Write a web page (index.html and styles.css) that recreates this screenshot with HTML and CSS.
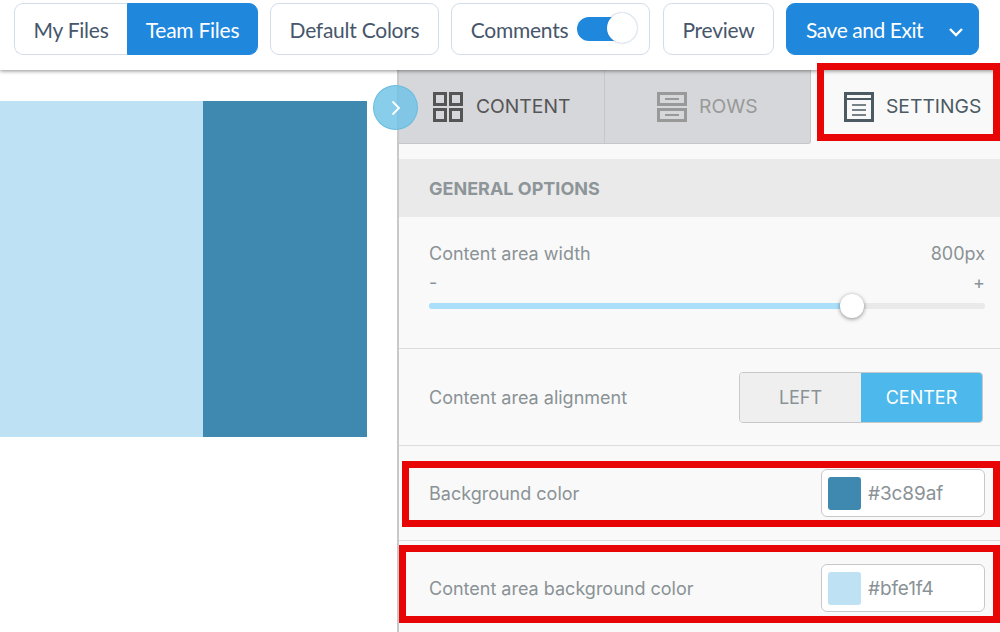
FILE: index.html
```html
<!DOCTYPE html>
<html lang="en">
<head>
    <meta charset="UTF-8">
    <title>Email Editor</title>
    <link rel="stylesheet" href="styles.css">
</head>
<body>
    <header class="toolbar">
        <div class="btn-group">
            <button class="btn btn-my">My Files</button>
            <button class="btn btn-team">Team Files</button>
        </div>
        <button class="btn btn-colors">Default Colors</button>
        <div class="btn btn-comments">
            <span>Comments</span>
            <span class="switch"><span class="switch-knob"></span></span>
        </div>
        <button class="btn btn-preview">Preview</button>
        <button class="btn btn-save">
            <span>Save and Exit</span>
            <svg class="save-arrow" width="16" height="10" viewBox="0 0 16 10"><path d="M2 2l6 6 6-6" fill="none" stroke="#fff" stroke-width="2.4"/></svg>
        </button>
    </header>

    <main class="workspace">
        <section class="canvas">
            <div class="email">
                <div class="email-content"></div>
                <div class="email-side"></div>
            </div>
        </section>

        <aside class="panel">
            <nav class="tabs">
                <div class="tab tab-content">
                    <svg width="30" height="30" viewBox="0 0 30 30" fill="none" stroke="#555" stroke-width="3">
                        <rect x="1.5" y="1.5" width="11" height="11"/>
                        <rect x="17.5" y="1.5" width="11" height="11"/>
                        <rect x="1.5" y="17.5" width="11" height="11"/>
                        <rect x="17.5" y="17.5" width="11" height="11"/>
                    </svg>
                    <span>CONTENT</span>
                </div>
                <div class="tab tab-rows">
                    <svg width="30" height="30" viewBox="0 0 30 30" fill="none" stroke="#999" stroke-width="3">
                        <rect x="1.5" y="1.5" width="27" height="11"/>
                        <rect x="1.5" y="17.5" width="27" height="11"/>
                        <path d="M8 7h14M8 23h14" stroke-width="2"/>
                    </svg>
                    <span>ROWS</span>
                </div>
                <div class="tab tab-settings">
                    <svg width="30" height="30" viewBox="0 0 30 30" fill="none" stroke="#4b5a63">
                        <rect x="1.5" y="1.5" width="27" height="27" stroke-width="3"/>
                        <path d="M2 7h26" stroke-width="2"/>
                        <path d="M8 13h14M8 18h14M8 23h14" stroke-width="1.6"/>
                    </svg>
                    <span>SETTINGS</span>
                </div>
            </nav>

            <h2 class="section-title">GENERAL OPTIONS</h2>

            <div class="row row-width">
                <div class="row-head">
                    <span>Content area width</span>
                    <span>800px</span>
                </div>
                <div class="scale"><span>-</span><span>+</span></div>
                <div class="slider">
                    <div class="slider-fill"></div>
                    <div class="slider-knob"></div>
                </div>
            </div>

            <div class="row row-align">
                <span>Content area alignment</span>
                <div class="align-group">
                    <span class="align-btn">LEFT</span>
                    <span class="align-btn align-active">CENTER</span>
                </div>
            </div>

            <div class="row row-color">
                <span>Background color</span>
                <div class="color-input">
                    <span class="swatch swatch-dark"></span>
                    <span>#3c89af</span>
                </div>
            </div>

            <div class="row row-color">
                <span>Content area background color</span>
                <div class="color-input">
                    <span class="swatch swatch-light"></span>
                    <span>#bfe1f4</span>
                </div>
            </div>
        </aside>

        <button class="collapse">
            <svg width="10" height="16" viewBox="0 0 10 16"><path d="M1.5 1.5L8 8l-6.5 6.5" fill="none" stroke="#fff" stroke-width="1.8"/></svg>
        </button>
    </main>

    <!-- annotation boxes from the screenshot -->
    <div class="mark mark-settings"></div>
    <div class="mark mark-bg"></div>
    <div class="mark mark-area"></div>
</body>
</html>
```

FILE: styles.css
```css
* {
    box-sizing: border-box;
}
html, body {
    height: 100%;
}
body {
    margin: 0;
    height: 632px;
    overflow: hidden;
    background: #fff;
    font-family: Inter, "Liberation Sans", sans-serif;
    position: relative;
}

/* top bar */
.toolbar {
    height: 70px;
    padding: 3px 0 0 14px;
    display: flex;
    align-items: flex-start;
    background: #fff;
    box-shadow: 0 1px 4px rgba(0, 0, 0, 0.45);
    position: relative;
    z-index: 2;
}
.btn {
    height: 52px;
    padding: 0;
    display: flex;
    align-items: center;
    justify-content: center;
    background: #fff;
    border: 1.5px solid #d3dde9;
    border-radius: 9px;
    font-family: Lato, sans-serif;
    font-size: 21px;
    letter-spacing: -0.25px;
    color: #46566b;
}
.btn-group {
    display: flex;
}
.btn-my {
    width: 113px;
    border-right: none;
    border-radius: 9px 0 0 9px;
}
.btn-team {
    width: 131px;
    background: #1f87dc;
    border-color: #1f87dc;
    border-radius: 0 9px 9px 0;
    color: #fff;
}
.btn-colors {
    width: 169px;
    margin-left: 12px;
}
.btn-comments {
    width: 199px;
    margin-left: 12px;
    padding-left: 6px;
    gap: 9px;
}
.btn-preview {
    width: 111px;
    margin-left: 13px;
}
.btn-save {
    width: 193px;
    margin-left: 12px;
    padding: 0 14px 0 19px;
    justify-content: space-between;
    background: #1f87dc;
    border-color: #1f87dc;
    letter-spacing: -0.45px;
    color: #fff;
}
.save-arrow {
    margin-top: 5px;
}
.switch {
    width: 59px;
    height: 24px;
    border-radius: 12px;
    background: #1f87dc;
    position: relative;
}
.switch-knob {
    position: absolute;
    right: -1px;
    top: -4px;
    width: 30px;
    height: 30px;
    border-radius: 50%;
    background: #fff;
    box-shadow: 0 0 2px rgba(70, 110, 170, 0.6);
}

/* main area */
.workspace {
    display: flex;
    height: 562px;
    position: relative;
}
.canvas {
    width: 397px;
    padding-top: 30.5px;
    background: #fff;
}
.email {
    display: flex;
    width: 367px;
    height: 336px;
}
.email-content {
    width: 203px;
    background: #bfe1f4;
}
.email-side {
    flex: 1;
    background: #3f88af;
}
.collapse {
    position: absolute;
    left: 373px;
    top: 15px;
    width: 45px;
    height: 45px;
    padding: 0;
    display: flex;
    align-items: center;
    justify-content: center;
    border: 1px solid rgba(100, 185, 222, 0.9);
    border-radius: 50%;
    background: rgba(110, 195, 230, 0.82);
}

/* side panel */
.panel {
    width: 603px;
    background: #f9f9f9;
    border-left: 2px solid #c9c9c9;
    color: #8a9296;
    font-size: 18px;
}
.tabs {
    display: flex;
    height: 74px;
}
.tab {
    display: flex;
    align-items: center;
    font-size: 19.3px;
    gap: 12px;
    background: #d6d7da;
    border-bottom: 1.5px solid #c6c7c9;
}
.tab span {
    margin-bottom: 2px;
}
.tab-content {
    width: 206px;
    padding-left: 34px;
    gap: 13px;
    color: #555;
    border-right: 1.5px solid #c6c7c9;
}
.tab-rows {
    width: 206px;
    padding-left: 52px;
    color: #999;
    border-right: 1.5px solid #c6c7c9;
    border-radius: 0 0 3px 0;
}
.tab-settings {
    flex: 1;
    padding-left: 33px;
    background: #f9f9f9;
    border-bottom: none;
    color: #4b5a63;
}
.section-title {
    margin: 15px 0 0;
    height: 58px;
    padding-left: 30px;
    display: flex;
    align-items: center;
    background: #eaeaea;
    font-size: 18px;
    font-weight: 700;
    color: #8d9599;
}
.row {
    padding: 0 15px 0 30px;
    border-bottom: 1.5px solid #ddd;
}
.row-width {
    height: 132px;
    padding-top: 26px;
}
.row-head, .scale {
    display: flex;
    justify-content: space-between;
}
.scale {
    margin-top: 9px;
    font-size: 18px;
    line-height: 20px;
}
.slider {
    height: 6px;
    margin-top: 10px;
    border-radius: 3px;
    background: #e9e9e9;
    position: relative;
}
.slider-fill {
    width: 76%;
    height: 100%;
    border-radius: 3px;
    background: #a9dff9;
}
.slider-knob {
    position: absolute;
    left: 411px;
    top: -9px;
    width: 24px;
    height: 24px;
    border-radius: 50%;
    background: #fff;
    box-shadow: 0 1px 4px rgba(0, 0, 0, 0.45);
}
.row-align, .row-color {
    display: flex;
    align-items: center;
    justify-content: space-between;
}
.row-align {
    height: 97px;
}
.row-color {
    height: 95px;
}
.align-group {
    display: flex;
    width: 244px;
    height: 51px;
    margin-right: 2px;
    border: 1.5px solid #c8c8c8;
    border-radius: 4px;
    overflow: hidden;
}
.align-btn {
    display: flex;
    align-items: center;
    justify-content: center;
    width: 121px;
    background: #efefef;
    color: #8a9296;
}
.align-active {
    flex: 1;
    background: #4db8eb;
    color: #fff;
}
.color-input {
    width: 164px;
    height: 48px;
    padding-left: 6px;
    display: flex;
    align-items: center;
    gap: 7px;
    background: #fff;
    border: 1.5px solid #c8c8c8;
    border-radius: 6px;
    font-size: 19px;
    letter-spacing: -0.1px;
}
.swatch {
    width: 33px;
    height: 33px;
    border-radius: 3px;
}
.swatch-dark {
    background: #3f88af;
}
.swatch-light {
    background: #bfe1f4;
}

/* red annotations */
.mark {
    position: absolute;
    border: 7px solid #e80505;
    z-index: 3;
}
.mark-settings {
    left: 817px;
    top: 63px;
    width: 183px;
    height: 78px;
}
.mark-bg {
    left: 402px;
    top: 461px;
    width: 598px;
    height: 66px;
}
.mark-area {
    left: 399px;
    top: 545px;
    width: 601px;
    height: 78px;
}
```
